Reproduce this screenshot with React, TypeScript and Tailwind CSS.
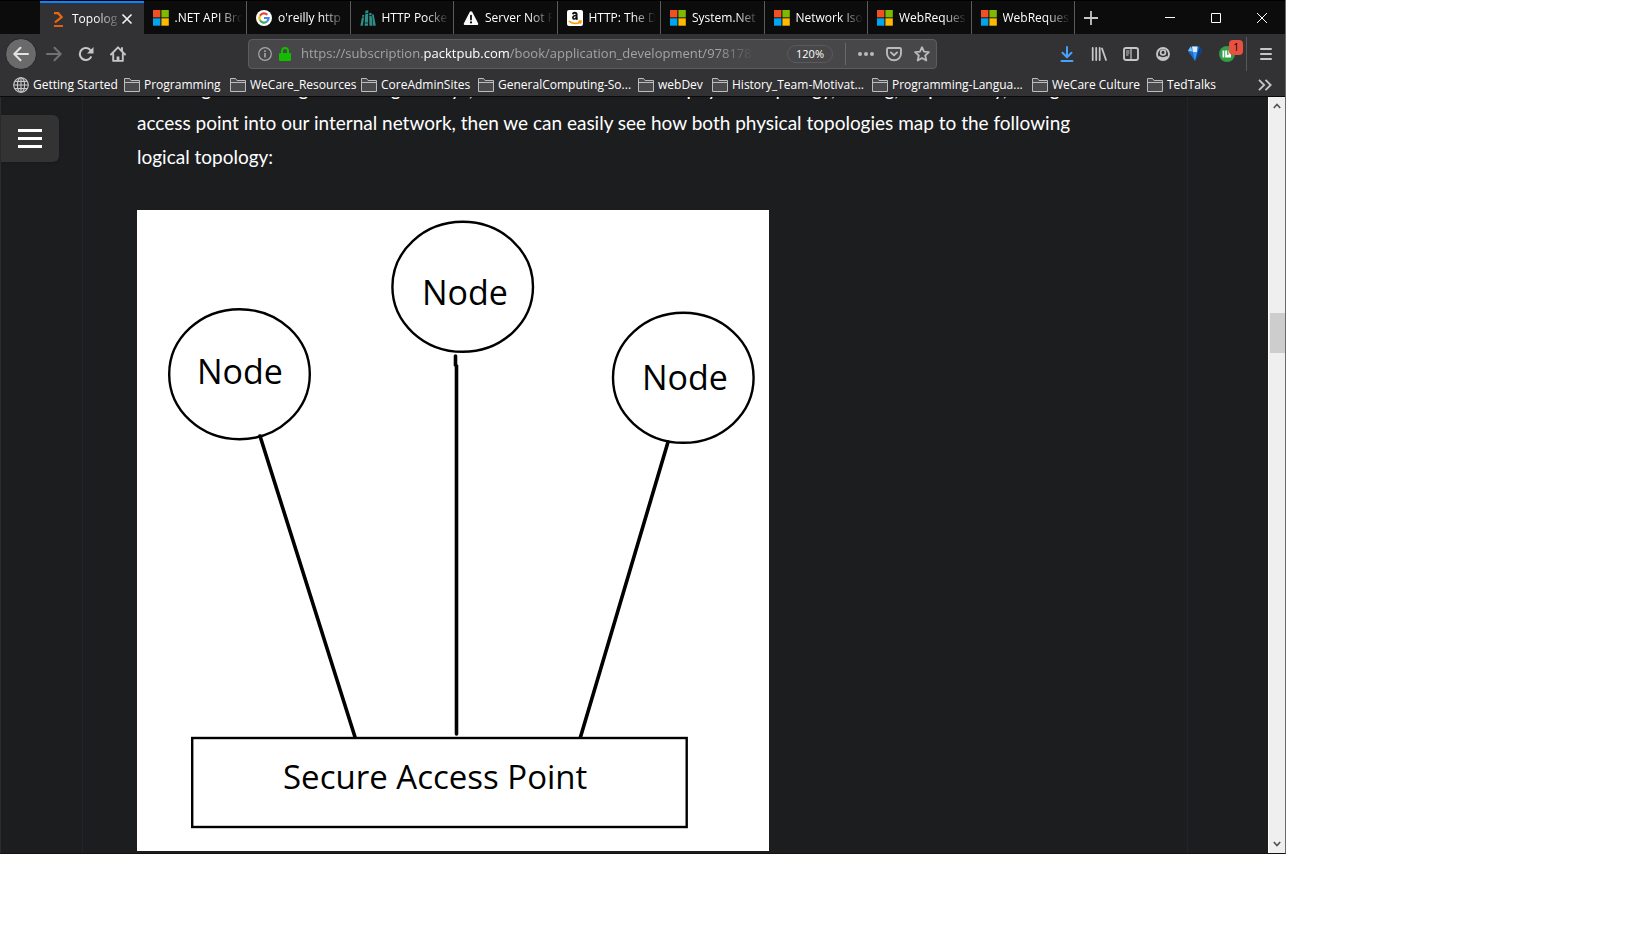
import React from 'react';

type IconProps = { className?: string };

const PacktIcon = () => (
  <svg className="size-4 shrink-0" viewBox="0 0 16 16" fill="none" stroke="#ec6611">
    <path d="M3 2.200h4.200L11 6.400" strokeWidth="2.300" />
    <path d="M11.300 5.600 4 11.300" strokeWidth="2.100" />
    <path d="M3 15h9" strokeWidth="1.800" />
  </svg>
);

const MicrosoftIcon = () => (
  <svg className="size-4 shrink-0" viewBox="0 0 16 16">
    <path fill="#f25022" d="M0 0h7.4v7.4H0z" />
    <path fill="#7fba00" d="M8.4 0h7.4v7.4H8.4z" />
    <path fill="#00a4ef" d="M0 8.3h7.4v7.4H0z" />
    <path fill="#ffb900" d="M8.4 8.3h7.4v7.4H8.4z" />
  </svg>
);

const GoogleIcon = () => (
  <svg className="size-4 shrink-0" viewBox="0 0 16 16" fill="none" strokeWidth="2.2">
    <circle cx="8" cy="8" r="8" fill="#fff" />
    <path stroke="#ea4335" d="M4 5.7A4.6 4.6 0 0 1 11.3 4.8" />
    <path stroke="#fbbc05" d="M4 5.7A4.6 4.6 0 0 0 4 10.3" />
    <path stroke="#34a853" d="M4 10.3A4.6 4.6 0 0 0 11 11.5" />
    <path stroke="#4285f4" d="M8 8h4.6A4.6 4.6 0 0 1 11 11.5" />
  </svg>
);

const BooksIcon = () => (
  <svg className="size-4 shrink-0" viewBox="0 0 16 16" fill="#2f8f88">
    <path d="M2.400 4.800 4.400 5.200 2.800 15.800H.4z" />
    <path d="M5.400.8 8.300.3 8 15.800H4.600z" />
    <path d="M9.200 3.200 11.400 2.800l1.200 13H9.400z" />
    <path d="M12 4.600l1.700-.3L15.800 15.800h-2.600z" />
    <path stroke="#0c0c0d" strokeWidth=".7" d="M5 3.400h3.400M9 5.600h3M2 7.200h2.400M4.600 13H8" />
  </svg>
);

const WarningIcon = () => (
  <svg className="size-4 shrink-0" viewBox="0 0 16 16">
    <path fill="#f9f9fa" d="M8 1.2c.6 0 1 .3 1.3.8l5.8 11.2c.5 1-.1 1.9-1.2 1.9H2.1c-1.100 0-1.700-.9-1.200-1.900L6.700 2c.3-.5.7-.8 1.300-.8z" />
    <path stroke="#0c0c0d" strokeWidth="1.800" strokeLinecap="round" d="M8 5.600v4" />
    <circle cx="8" cy="12.400" r="1.100" fill="#0c0c0d" />
  </svg>
);

const AmazonIcon = () => (
  <svg className="size-4 shrink-0" viewBox="0 0 16 16" fill="none">
    <rect width="16" height="16" rx="2" fill="#fff" />
    <path stroke="#111" strokeWidth="1.900" d="M5.700 4.300C6.300 2.300 9.600 2.300 9.600 4.400V8c0 .8.300 1.200.8 1.700" />
    <path stroke="#111" strokeWidth="1.700" d="M9.400 5.500C7 5.500 5.900 6.200 5.900 7.600c0 2 3.300 1.800 3.700-.4" />
    <path stroke="#f90" strokeWidth="1.500" d="M1.800 11.200c3.600 3 8.400 3 11.600.6M11.400 11.200l2.700-.1-.6 2.500" />
  </svg>
);

const FolderIcon = () => (
  <svg className="size-4 shrink-0" viewBox="0 0 16 16" fill="#4a4a4c" stroke="#bdbdbe">
    <path d="M.5 14.500v-13h5l1.500 2h8.500v11z" />
    <path d="M.5 5.500h15" />
  </svg>
);

const GlobeIcon = () => (
  <svg className="size-4 shrink-0" viewBox="0 0 16 16" fill="none" stroke="#c8c8c9" strokeWidth="1.100">
    <circle cx="8" cy="8" r="7.300" />
    <ellipse cx="8" cy="8" rx="3.600" ry="7.300" />
    <path d="M8 .7v14.600M.7 8h14.600M1.800 4.400h12.400M1.800 11.600h12.400" />
  </svg>
);

const BackIcon = () => (
  <svg className="size-4" viewBox="0 0 16 16" fill="none" stroke="#e3e3e4" strokeWidth="2" strokeLinecap="round" strokeLinejoin="round">
    <path d="M15 8H1.500M7.500 1.800 1.300 8l6.200 6.200" />
  </svg>
);

const ForwardIcon = () => (
  <svg className="size-4" viewBox="0 0 16 16" fill="none" stroke="#727274" strokeWidth="2" strokeLinecap="round" strokeLinejoin="round">
    <path d="M1 8h13.500M8.500 1.800 14.700 8l-6.200 6.200" />
  </svg>
);

const ReloadIcon = () => (
  <svg className="size-4" viewBox="0 0 16 16" fill="none">
    <path stroke="#c6c6c7" strokeWidth="2.100" strokeLinecap="round" d="M12.900 11.200A6 6 0 1 1 12.600 4.400" />
    <path fill="#c6c6c7" d="M15.500 1v6.500H9z" />
  </svg>
);

const HomeIcon = () => (
  <svg className="size-4" viewBox="0 0 16 16" fill="none" stroke="#c6c6c7" strokeWidth="1.900" strokeLinejoin="round" strokeLinecap="round">
    <path d="M1 8.500 8 1.300l7 7.200" />
    <path d="M3.200 8v6.900h9.600V8M12 2v2.500" />
    <path d="M8 15v-4.500" strokeWidth="2.800" strokeLinecap="butt" />
  </svg>
);

const InfoIcon = () => (
  <svg className="size-[14px] shrink-0" viewBox="0 0 14 14" fill="none" stroke="#a9a9ab">
    <circle cx="7" cy="7" r="6.300" strokeWidth="1.200" />
    <path strokeWidth="1.600" d="M7 6v4.500M7 3.200v1.700" />
  </svg>
);

const LockIcon = () => (
  <svg className="h-[14px] w-3 shrink-0" viewBox="0 0 12 14" fill="none">
    <path stroke="#12bc00" strokeWidth="2" d="M3 7V4a3 3 0 0 1 6 0v3" />
    <rect y="6" width="12" height="8" rx="1" fill="#12bc00" />
  </svg>
);

const DotsIcon = () => (
  <svg className="size-4" viewBox="0 0 16 16" fill="#bababb">
    <circle cx="2" cy="8" r="2" />
    <circle cx="8" cy="8" r="2" />
    <circle cx="14" cy="8" r="2" />
  </svg>
);

const PocketIcon = () => (
  <svg className="size-4" viewBox="0 0 16 16" fill="none" stroke="#bababb" strokeWidth="1.900" strokeLinejoin="round" strokeLinecap="round">
    <path d="M2.300 2h11.400c.8 0 1.300.5 1.300 1.200V7.500a7 6.800 0 0 1-14 0V3.200C1 2.500 1.500 2 2.300 2z" />
    <path d="M4.900 6.400 8 9.300l3.100-2.900" />
  </svg>
);

const StarIcon = () => (
  <svg className="size-4" viewBox="0 0 16 16" fill="none" stroke="#bababb" strokeWidth="1.800" strokeLinejoin="round">
    <path d="M8 1.200l2 4.500 4.900.5-3.700 3.300 1.100 5L8 12l-4.300 2.500 1.100-5L1.100 6.200 6 5.700z" />
  </svg>
);

const DownloadIcon = () => (
  <svg className="size-4" viewBox="0 0 16 16" fill="none" stroke="#45a1ff" strokeWidth="2" strokeLinecap="round" strokeLinejoin="round">
    <path d="M8 1v10M3.500 6.800 8 11.300l4.500-4.500M2.500 15h11" />
  </svg>
);

const LibraryIcon = () => (
  <svg className="size-4" viewBox="0 0 16 16" fill="none" stroke="#c6c6c7" strokeWidth="1.800" strokeLinecap="round">
    <path d="M1.700 2v12M5.200 2v12M8.700 2v12M11 2.500l4 11.500" />
  </svg>
);

const SidebarIcon = () => (
  <svg className="size-4" viewBox="0 0 16 16" fill="none" stroke="#c6c6c7">
    <rect x="1" y="2" width="14" height="12" rx="2" strokeWidth="1.900" />
    <path strokeWidth="1.200" d="M8 2v12M3 5h3.500M3 7h3.500M3 9h2.500" />
  </svg>
);

const AccountIcon = () => (
  <svg className="size-4" viewBox="0 0 16 16" fill="none" stroke="#c6c6c7">
    <circle cx="8" cy="8" r="6" strokeWidth="1.900" />
    <circle cx="8" cy="6.400" r="2.400" strokeWidth="1.700" />
    <path strokeWidth="2.600" d="M3.500 11c2.500 1.900 6.500 1.900 9 0" />
  </svg>
);

const DiamondIcon = () => (
  <svg className="size-4" viewBox="0 0 16 16">
    <path fill="#1b6fd0" d="M3.500.5h9L15 5 8 15 1 5z" />
    <path fill="#7cc4ff" d="M3.500.5 6 5.500 1 5z" />
    <path fill="#d9efff" d="M5 .5h5.500L10 6H6z" />
    <path fill="#3e9df0" d="M6 6h4l-2 9z" />
    <path fill="#0b3f8c" d="M12.500.5 15 5l-7 10 3-9.500z" />
  </svg>
);

const CheckerIcon = () => (
  <svg className="size-4" viewBox="0 0 16 16">
    <circle cx="8" cy="8" r="8" fill="#2f9e44" />
    <path fill="#fff" d="M3.500 4.500h1.800v7H3.500zM6.200 4.500h2v7h-2zM8.200 9h3.800v2.500H8.200zM9.500 4.500H12v5H9.500z" />
  </svg>
);

const MenuIcon = () => (
  <svg className="size-4" viewBox="0 0 16 16" stroke="#c6c6c7" strokeWidth="2" strokeLinecap="round">
    <path d="M3 3h10M3 8h10M3 13h10" />
  </svg>
);

const CloseIcon = ({ className }: IconProps) => (
  <svg className={className} viewBox="0 0 12 12" fill="none" stroke="#f0f0f1" strokeWidth="1.700">
    <path d="M1.500 1.500l9 9M10.500 1.500l-9 9" />
  </svg>
);

const ScrollArrow = ({ className }: IconProps) => (
  <svg className={className} viewBox="0 0 8 6" fill="none" stroke="#505050" strokeWidth="1.600">
    <path d="M.8 5 4 1.500 7.200 5" />
  </svg>
);

const tabs = [
  { title: '.NET API Bro', Icon: MicrosoftIcon },
  { title: "o'reilly http", Icon: GoogleIcon },
  { title: 'HTTP Pocke', Icon: BooksIcon },
  { title: 'Server Not F', Icon: WarningIcon },
  { title: 'HTTP: The D', Icon: AmazonIcon },
  { title: 'System.Net', Icon: MicrosoftIcon },
  { title: 'Network Iso', Icon: MicrosoftIcon },
  { title: 'WebReques', Icon: MicrosoftIcon },
  { title: 'WebReques', Icon: MicrosoftIcon },
];

const bookmarks = [
  { label: 'Getting Started', width: 'w-[111px]', Icon: GlobeIcon },
  { label: 'Programming', width: 'w-[106px]', Icon: FolderIcon },
  { label: 'WeCare_Resources', width: 'w-[131px]', Icon: FolderIcon },
  { label: 'CoreAdminSites', width: 'w-[117px]', Icon: FolderIcon },
  { label: 'GeneralComputing-So...', width: 'w-[160px]', Icon: FolderIcon },
  { label: 'webDev', width: 'w-[74px]', Icon: FolderIcon },
  { label: 'History_Team-Motivat...', width: 'w-[160px]', Icon: FolderIcon },
  { label: 'Programming-Langua...', width: 'w-[160px]', Icon: FolderIcon },
  { label: 'WeCare Culture', width: 'w-[115px]', Icon: FolderIcon },
  { label: 'TedTalks', width: 'w-[80px]', Icon: FolderIcon },
];

const tools = [
  { label: 'Downloads', Icon: DownloadIcon },
  { label: 'Library', Icon: LibraryIcon },
  { label: 'Sidebars', Icon: SidebarIcon },
  { label: 'Account', Icon: AccountIcon },
  { label: 'Diamond', Icon: DiamondIcon },
];

function TabStrip() {
  return (
    <div className="flex h-[34px] border-t border-black bg-[#0c0c0d] pl-10">
      <div className="grid w-[1035px] grid-cols-10 text-white">
        <div className="flex items-center border-t-2 border-[#0a84ff] bg-[#323234] pl-[11px]">
          <PacktIcon />
          <span className="ml-[5px] w-[46px] overflow-hidden whitespace-nowrap [mask-image:linear-gradient(to_right,black_50%,#0003)]">
            Topolog
          </span>
          <button aria-label="Close tab" className="ml-[3px]">
            <CloseIcon className="size-3" />
          </button>
        </div>
        {tabs.map(({ title, Icon }, i) => (
          <div key={i} className="flex items-center gap-[6px] border-r border-[#5a5a5c] pr-1 pl-[9px]">
            <Icon />
            <span className="min-w-0 flex-1 overflow-hidden whitespace-nowrap [mask-image:linear-gradient(to_right,black_65%,transparent)]">
              {title}
            </span>
          </div>
        ))}
      </div>
      <button aria-label="New tab" className="flex w-8 items-center justify-center">
        <svg className="size-[14px]" viewBox="0 0 14 14" stroke="#c6c6c7" strokeWidth="1.800">
          <path d="M7 0v14M0 7h14" />
        </svg>
      </button>
      <div className="ml-auto flex">
        <button aria-label="Minimize" className="flex w-[46px] items-center justify-center">
          <svg className="size-[10px]" viewBox="0 0 10 10" stroke="#fff">
            <path d="M0 4.500h10" />
          </svg>
        </button>
        <button aria-label="Maximize" className="flex w-[46px] items-center justify-center">
          <svg className="size-[10px]" viewBox="0 0 10 10" fill="none" stroke="#fff">
            <path d="M.5.5h9v9h-9z" />
          </svg>
        </button>
        <button aria-label="Close window" className="flex w-[46px] items-center justify-center">
          <svg className="size-[10px]" viewBox="0 0 10 10" stroke="#fff">
            <path d="M0 0l10 10M10 0 0 10" />
          </svg>
        </button>
      </div>
    </div>
  );
}

function NavBar() {
  return (
    <div className="flex h-10 items-center bg-[#323234] pl-[5px]">
      <button aria-label="Back" className="flex size-8 items-center justify-center rounded-full border border-[#252527] bg-[#6a6a6b]">
        <BackIcon />
      </button>
      <button aria-label="Forward" className="flex w-[34px] justify-center">
        <ForwardIcon />
      </button>
      <button aria-label="Reload" className="flex w-[30px] justify-center">
        <ReloadIcon />
      </button>
      <button aria-label="Home" className="flex w-[34px] justify-center">
        <HomeIcon />
      </button>
      <label className="relative ml-[113px] flex h-[30px] w-[689px] items-center rounded-sm border border-[#5c5c5e] bg-[#474749] pl-[9px]">
        <InfoIcon />
        <span className="w-[7px]" />
        <LockIcon />
        <input aria-label="Address" className="absolute inset-y-0 left-12 w-[460px] bg-transparent outline-none" />
        <span className="ml-[10px] w-[453px] overflow-hidden text-[13px] whitespace-nowrap text-[#a3a3a5] [mask-image:linear-gradient(to_right,black_92%,transparent)]">
          https://subscription.<span className="text-white">packtpub.com</span>/book/application_development/978178
        </span>
        <button className="relative ml-[33px] h-[18px] w-[46px] rounded-full border border-[#5a5a5c] text-[11px] leading-4 text-white">
          120%
        </button>
        <span className="ml-3 h-[22px] w-px bg-[#68686a]" />
        <button aria-label="Page actions" className="relative ml-3">
          <DotsIcon />
        </button>
        <button aria-label="Save to Pocket" className="relative ml-3">
          <PocketIcon />
        </button>
        <button aria-label="Bookmark this page" className="relative ml-3">
          <StarIcon />
        </button>
      </label>
      <div className="ml-auto flex h-full items-center">
        {tools.map(({ label, Icon }) => (
          <button key={label} aria-label={label} className="flex w-8 justify-center">
            <Icon />
          </button>
        ))}
        <button aria-label="Checker, 1 alert" className="relative flex w-8 justify-center">
          <CheckerIcon />
          <span className="absolute -top-[6px] right-0 h-[15px] w-[14px] rounded-sm bg-[#e8503f] text-center text-[10px] leading-[15px] text-black">
            1
          </span>
        </button>
        <span className="ml-[3px] h-[34px] w-px bg-[#58585a]" />
        <button aria-label="Menu" className="flex w-[38px] justify-center">
          <MenuIcon />
        </button>
      </div>
    </div>
  );
}

function BookmarksBar() {
  return (
    <nav className="flex h-[23px] items-center border-b border-[#0a0a0b] bg-[#323234] pl-[13px] text-white">
      {bookmarks.map(({ label, width, Icon }) => (
        <a key={label} href="#" className={'flex h-5 shrink-0 items-center gap-1 whitespace-nowrap ' + width}>
          <Icon />
          {label}
        </a>
      ))}
      <button aria-label="More bookmarks" className="mr-[13px] ml-auto">
        <svg className="h-3 w-[14px]" viewBox="0 0 14 12" fill="none" stroke="#c6c6c7" strokeWidth="1.800">
          <path d="M1 .8 6.200 6 1 11.200M7.500.8 12.700 6l-5.200 5.200" />
        </svg>
      </button>
    </nav>
  );
}

function TopologyDiagram() {
  return (
    <svg
      role="img"
      aria-label="Star topology"
      className="mt-9 h-[641px] w-[632px] bg-white font-['Open_Sans',sans-serif]"
      viewBox="0 0 632 641"
    >
      <g fill="none" stroke="#000" strokeWidth="2.400">
        <ellipse cx="325.700" cy="76.800" rx="70.300" ry="65" />
        <ellipse cx="102.500" cy="164.200" rx="70.300" ry="65" />
        <ellipse cx="546.300" cy="167.800" rx="70.300" ry="65" />
        <rect x="55.200" y="528" width="494.500" height="89" />
      </g>
      <g fill="none" stroke="#000" strokeWidth="3.600" strokeLinecap="round">
        <path d="M123 226 218 527" />
        <path d="M318.500 146v9l1 1v368" />
        <path d="M531 232 443.500 527" />
      </g>
      <g className="text-[34px]">
        <text x="285" y="95">Node</text>
        <text x="60" y="174">Node</text>
        <text x="505" y="180">Node</text>
      </g>
      <text className="text-[33px]" x="146" y="579">Secure Access Point</text>
    </svg>
  );
}

function Page() {
  return (
    <div className="flex bg-[#1c1d1f]">
      <div className="w-px bg-[#2b2c2e]" />
      <div className="w-[81px] pt-[18px]">
        <button aria-label="Open navigation" className="flex h-[47px] w-[58px] flex-col items-center justify-center gap-[5px] rounded-r-md bg-[#333] shadow">
          <span className="h-[3px] w-6 bg-white" />
          <span className="h-[3px] w-6 bg-white" />
          <span className="h-[3px] w-6 bg-white" />
        </button>
      </div>
      <article className="min-w-0 flex-1 overflow-hidden border-x border-[#232427] px-[54px] pb-[2px]">
        <p className="-mt-[25px] pr-12 font-[Lato,sans-serif] text-[19px] leading-[34px] text-white">
          <span className="block whitespace-nowrap">
            exposing the routing nodes as gateways, and each of the nodes in physical topology, or ring, respectively, a single
          </span>
          access point into our internal network, then we can easily see how both physical topologies map to the following
          logical topology:
        </p>
        <TopologyDiagram />
      </article>
      <div className="w-20" />
      <div className="flex w-[17px] flex-col items-center border-l border-white bg-[#efefef] pt-[6px] pb-[6px]">
        <ScrollArrow className="h-[6px] w-2" />
        <div className="mt-[204px] h-10 w-[15px] bg-[#cdcdcd]" />
        <ScrollArrow className="mt-auto h-[6px] w-2 rotate-180" />
      </div>
    </div>
  );
}

export default function App() {
  return (
    <div className="min-h-screen bg-white">
      <div className="w-full max-w-[1286px] overflow-hidden border-r border-b border-r-[#6b6b6b] border-b-[#151012] font-['Open_Sans',sans-serif] text-[12px]">
        <TabStrip />
        <NavBar />
        <BookmarksBar />
        <Page />
      </div>
    </div>
  );
}
